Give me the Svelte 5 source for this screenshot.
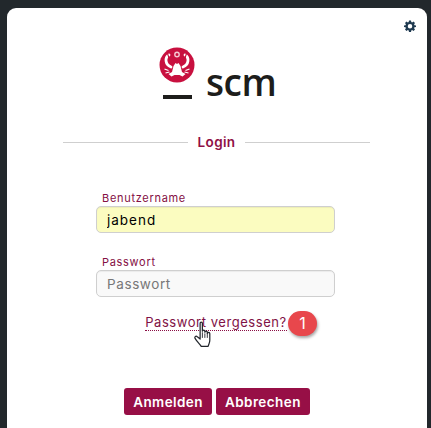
<script>
  let username = $state('jabend');
</script>

<div class="page">
  <main class="card">
    <button class="gear" aria-label="Einstellungen">
      <svg viewBox="0 0 24 24" width="12" height="12"><path fill="#1f3a50" fill-rule="evenodd" d="M10 1h4l.6 3.100 1.700.7L19 3l3 3-1.800 2.700.7 1.700L24 11v3l-3.100.6-.7 1.700L22 19l-3 3-2.700-1.800-1.700.7L14 24h-4l-.6-3.100-1.700-.7L5 22l-3-3 1.800-2.700-.7-1.700L0 14v-3l3.100-.6.7-1.700L2 6l3-3 2.700 1.800 1.700-.7zM12 8a4.500 4.500 0 1 0 0 9 4.500 4.500 0 0 0 0-9z"/></svg>
    </button>

    <div class="logo">
      <div class="mark">
        <svg viewBox="0 0 36 36" width="36" height="36">
          <circle cx="18" cy="18" r="17.500" fill="#c8103f"/>
          <circle cx="18" cy="7.500" r="2.200" fill="none" stroke="#f6c8d2" stroke-width="1.400"/>
          <path fill="#fff" d="M14.500 19l2-3 1.500 1 1.500-1 2 3 1.500 6 3.500 2-3 2.500-3-1.500h-5l-3 1.500-3-2.500 3.500-2z"/>
          <path fill="none" stroke="#fff" stroke-width="2.800" stroke-linecap="round" stroke-linejoin="round" d="M10 8c-4.500 2.500-4 9.500 2 12M26 8c4.500 2.500 4 9.500-2 12"/>
          <path fill="none" stroke="#c8103f" stroke-width="1.100" d="M8.500 6.500l1.500 4.500M27.500 6.500l-1.500 4.500"/>
          <path fill="none" stroke="#fff" stroke-width="1.200" d="M5.500 22l4 1.500M6.500 26l4-1M30.500 22l-4 1.500M29.500 26l-4-1"/>
        </svg>
        <span class="bar"></span>
      </div>
      <span class="word">scm</span>
    </div>

    <div class="title"><span class="rule"></span><h1>Login</h1><span class="rule"></span></div>

    <form class="form">
      <label class="field">
        <span>Benutzername</span>
        <input class="filled" bind:value={username} />
      </label>
      <label class="field second">
        <span>Passwort</span>
        <input type="text" placeholder="Passwort" />
      </label>
      <div class="forgot">
        <a href="#forgot">Passwort vergessen?</a>
        <span class="badge">1</span>
        <svg class="hand" viewBox="0 0 18 24" width="21" height="27">
          <path fill="#fff" stroke="#22262c" stroke-width="1.100" stroke-linejoin="round" d="M6 2c0-1.400 2-1.400 2 0v7c0-1.200 2.200-1.200 2.200 0v1c0-1.200 2.200-1.200 2.200 0v1c0-1.200 2.200-1.200 2.200 0v6c0 2.500-1 3.500-1.500 5.500H7c-1-1.700-4-4.500-5.500-7-.8-1.500.8-2.600 2-1.500L6 16z"/>
          <path fill="none" stroke="#22262c" stroke-width=".8" d="M8 10v5M10.200 11v4M12.400 11v4"/>
        </svg>
      </div>
      <div class="actions">
        <button type="button">Anmelden</button>
        <button type="button">Abbrechen</button>
      </div>
    </form>
  </main>
</div>

<style>
  :global(body) { margin: 0; background: #22282c; }
  .page { height: 428px; overflow: hidden; padding: 8px 4px 0 7px; box-sizing: border-box; font-family: "Inter", "Open Sans", sans-serif; }
  .card { position: relative; background: #fff; border-radius: 9px 9px 0 0; height: 420px; box-sizing: border-box; padding-top: 37px; }
  .gear { position: absolute; top: 12px; right: 11px; padding: 0; border: 0; background: none; line-height: 0; }
  .logo { display: flex; align-items: flex-end; gap: 11px; height: 54px; padding-left: 152px; }
  .mark { display: flex; flex-direction: column; align-items: center; gap: 12px; }
  .mark svg { display: block; }
  .bar { width: 29px; height: 4px; background: #1d1d1b; }
  .word { font: 600 37px/24px "Open Sans", sans-serif; color: #1d1d1b; height: 29px; letter-spacing: -.5px; }
  .title { display: flex; align-items: center; gap: 10px; margin: 33px 57px 0 56px; height: 20px; }
  .rule { flex: 1; height: 1px; background: #cfcfcf; }
  .title h1 { margin: 0; font-size: 13.500px; font-weight: 600; color: #8f0f45; letter-spacing: .35px; }
  .form { display: flex; flex-direction: column; margin: 39px 92px 0 89px; }
  .field { display: flex; flex-direction: column; height: 63px; }
  .field.second { height: 64px; padding-top: 1px; box-sizing: border-box; }
  .field span { font-size: 11px; line-height: 15px; padding-left: 6px; color: #850f44; letter-spacing: .7px; }
  .field input { box-sizing: border-box; height: 27px; width: 239px; padding: 0 10px; border: 1px solid #cfcfcf; border-radius: 5px; background: #f9f9f9; font: 13.500px "Inter", sans-serif; letter-spacing: .6px; color: #111; outline: none; box-shadow: inset 0 1px 1px rgba(0,0,0,.06); }
  .field input.filled { background: #fbfcc0; letter-spacing: 1px; color: #000; }
  .field input::placeholder { color: #777; opacity: 1; }
  .forgot { position: relative; text-align: center; height: 75px; margin-top: -5px; padding-left: 1px; line-height: 16px; }
  .forgot a { font-size: 13px; color: #7f1245; text-decoration: none; border-bottom: 1px dotted #8a0f45; letter-spacing: .55px; }
  .badge { position: absolute; left: 192px; top: -2px; width: 29px; height: 25px; border-radius: 13px; background: #e8474c; color: #fff; font-size: 16px; line-height: 25px; box-shadow: 1px 2px 3px rgba(0,0,0,.35); }
  .hand { position: absolute; left: 97px; top: 8px; }
  .actions { display: flex; justify-content: center; gap: 4px; padding-left: 3px; }
  .actions button { height: 27px; padding: 0 9px; border: 0; border-radius: 3px; background: #970f46; color: #fff; font: 600 13.500px "Inter", sans-serif; letter-spacing: .42px; }
</style>
